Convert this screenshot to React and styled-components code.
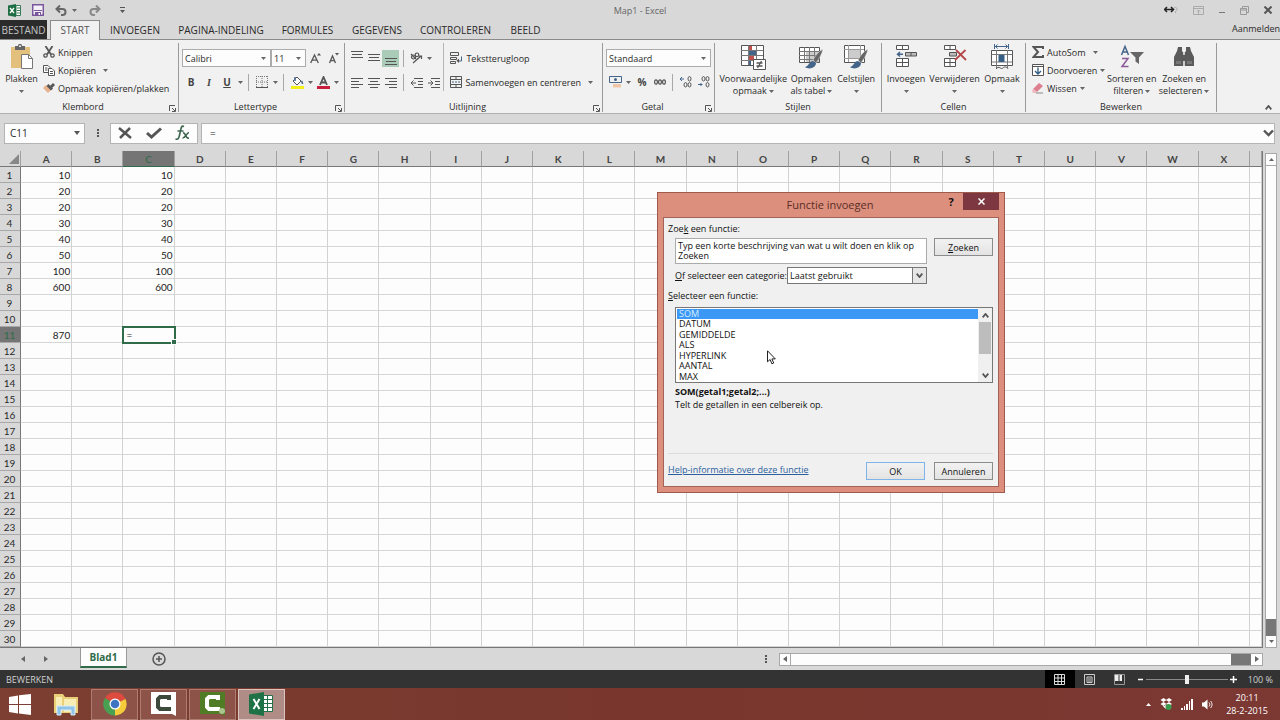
import { useState } from 'react';
import styled, { createGlobalStyle, css } from 'styled-components';

const GlobalStyle = createGlobalStyle`
  :root {
    --chrome: #d8d8d8;
    --ribbon: #f1f1f1;
    --line: #8a8a8a;
    --ink: #2a2a2a;
    --green: #2f6b48;
    --ui: 'Open Sans', 'Noto Sans', sans-serif;
    --cell: Lato, 'Open Sans', sans-serif;
  }
  * {
    box-sizing: border-box;
  }
  body {
    margin: 0;
    overflow: hidden;
    font: 500 9px/11px var(--ui);
    color: var(--ink);
  }
  button, input, select, textarea {
    font: inherit;
    color: inherit;
    margin: 0;
    padding: 0;
    border: 0;
    border-radius: 0;
    background: none;
    outline: none;
  }
  svg {
    display: block;
    flex: none;
  }
`;

const Window = styled.div`
  position: relative;
  display: flex;
  flex-direction: column;
  height: 100vh;
  background: var(--chrome);
`;

/* title bar */

const TitleBar = styled.header`
  display: grid;
  grid-template-columns: 1fr auto 1fr;
  align-items: center;
  height: 20px;
  padding: 0 8px;
  h1 {
    margin: 0;
    font: inherit;
    color: #666;
  }
`;

const QuickAccess = styled.div`
  display: flex;
  align-items: center;
  height: 18px;
  gap: ${(p) => p.$gap || 0}px;
  justify-content: ${(p) => (p.$end ? 'flex-end' : 'flex-start')};
`;

/* ribbon tabs */

const TabBar = styled.nav`
  display: flex;
  height: 20px;
  border-bottom: 1px solid var(--line);
  white-space: nowrap;
`;

const Tab = styled.button`
  width: ${(p) => p.$w}px;
  height: 19px;
  padding-top: 1px;
  font-size: 10px;
  ${(p) => p.$file && css`
    background: #2b2b2b;
    color: #c4c4c4;
    margin-right: 3px;
  `}
  ${(p) => p.$active && css`
    height: 20px;
    padding: 0;
    border: 1px solid var(--line);
    border-bottom: 0;
    background: var(--ribbon);
    color: #555;
  `}
`;

const SignIn = styled.a`
  margin: 3px 0 0 auto;
  color: inherit;
  text-decoration: none;
`;

/* ribbon */

const RibbonBar = styled.div`
  display: flex;
  height: 74px;
  background: var(--ribbon);
  border-bottom: 1px solid #b0b0b0;
  white-space: nowrap;
`;

const Group = styled.section`
  position: relative;
  display: flex;
  flex-direction: column;
  flex: none;
  width: ${(p) => p.$w}px;
  height: 69px;
  margin-top: 3px;
  border-right: 1px solid #9a9a9a;
  footer {
    margin-top: auto;
    padding-right: ${(p) => (p.$launcher ? 12 : 0)}px;
    height: 10px;
    line-height: 10px;
    text-align: center;
  }
`;

const Launcher = styled.button`
  position: absolute;
  right: 2px;
  bottom: 0;
  height: 7px;
`;

const GroupBody = styled.div`
  display: flex;
  justify-content: ${(p) => (p.$center ? 'center' : 'flex-start')};
  padding: 0 ${(p) => p.$pad || 0}px;
`;

const Stack = styled.div`
  display: flex;
  flex-direction: column;
  padding-left: ${(p) => p.$pad || 0}px;
`;

const BigButton = styled.button`
  display: flex;
  flex-direction: column;
  align-items: center;
  width: ${(p) => p.$w}px;
  height: 56px;
  padding-top: 1px;
  line-height: 12px;
  > svg:first-child {
    margin-bottom: 3px;
  }
  span {
    display: flex;
    align-items: center;
    justify-content: center;
    gap: 2px;
    height: 12px;
  }
`;

const LineButton = styled.button`
  display: flex;
  align-items: center;
  gap: 3px;
  height: 18px;
`;

const Spacer = styled.i`
  width: 1px;
`;

const ToolRow = styled.div`
  display: flex;
  align-items: center;
  height: 18px;
  margin-top: 6px;
`;

const Tool = styled.button`
  display: flex;
  align-items: center;
  justify-content: center;
  width: ${(p) => p.$w || 18}px;
  height: 17px;
  background: ${(p) => (p.$on ? '#a9cbb8' : 'none')};
`;

const Glyph = styled.span`
  font-size: 10px;
  font-weight: 700;
  color: #444;
  font-style: ${(p) => (p.$italic ? 'italic' : 'normal')};
  font-family: ${(p) => (p.$italic ? "'Liberation Serif', serif" : 'inherit')};
  text-decoration: ${(p) => (p.$under ? 'underline' : 'none')};
`;

const Sep = styled.i`
  width: 1px;
  height: 17px;
  margin: 0 4px;
  background: #a8a8a8;
`;

const AlignBlock = styled.div`
  width: 99px;
  border-right: 1px solid #b5b5b5;
`;

const ComboBox = styled.label`
  display: flex;
  align-items: center;
  width: ${(p) => p.$w}px;
  height: 18px;
  padding-right: 4px;
  border: 1px solid #ababab;
  background: #fdfdfd;
  select {
    flex: 1;
    min-width: 0;
    padding-left: 2px;
    appearance: none;
  }
`;

const Collapse = styled.button`
  align-self: flex-end;
  margin: 0 8px 3px auto;
`;

/* formula bar */

const FormulaBar = styled.div`
  display: flex;
  align-items: center;
  height: 37px;
  padding: 1px 5px 0 4px;
`;

const NameBox = styled.label`
  display: flex;
  align-items: center;
  width: 81px;
  height: 21px;
  padding: 0 4px 0 5px;
  border: 1px solid #b4b4b4;
  background: #fdfdfd;
  input {
    flex: 1;
    min-width: 0;
    font-size: 10px;
  }
`;

const Dots = styled.span`
  display: flex;
  justify-content: center;
  width: 25px;
`;

const FormulaTools = styled.div`
  display: flex;
  align-items: center;
  justify-content: space-around;
  width: 88px;
  height: 21px;
  margin-right: 3px;
  border: 1px solid #b4b4b4;
  background: #fdfdfd;
`;

const FormulaField = styled.label`
  display: flex;
  align-items: center;
  flex: 1;
  height: 21px;
  padding-left: 8px;
  border: 1px solid #b4b4b4;
  background: #fdfdfd;
  input {
    flex: 1;
    font-size: 10px;
  }
`;

/* sheet */

const SheetArea = styled.main`
  display: flex;
  flex: 1;
  min-height: 0;
  overflow: hidden;
`;

const SheetFrame = styled.div`
  flex: 1;
  overflow: hidden;
  border-right: 1px solid #777;
  border-bottom: 1px solid #777;
`;

const Grid = styled.table`
  width: 100%;
  table-layout: fixed;
  border-collapse: separate;
  border-spacing: 0;
  font: 10px/13px var(--cell);
  color: #1c1c1c;
  th, td {
    height: 16px;
    padding: 2px 1px 0 0;
    overflow: hidden;
  }
  thead th {
    padding: 1px 0 0;
  }
  col.rows {
    width: 21px;
  }
  col.rest {
    width: 12px;
  }
`;

const ColHead = styled.th`
  font-weight: ${(p) => (p.$on ? 400 : 700)};
  color: ${(p) => (p.$on ? 'var(--green)' : '#444')};
  background: ${(p) => (p.$on ? '#757575' : 'var(--chrome)')};
  border-right: 1px solid #a0a0a0;
  border-bottom: 1px solid ${(p) => (p.$on ? 'var(--green)' : '#777')};
  svg {
    margin-left: auto;
  }
`;

const RowHead = styled.th`
  font-weight: 400;
  color: ${(p) => (p.$on ? 'var(--green)' : '#2a2a2a')};
  background: ${(p) => (p.$on ? '#757575' : 'var(--chrome)')};
  border-right: 1px solid #777;
  border-bottom: 1px solid #a8a8a8;
`;

const Cell = styled.td`
  text-align: right;
  background: #fdfdfd;
  border-right: 1px solid #d2d2d2;
  border-bottom: 1px solid #d6d6d6;
  ${(p) => p.$active && css`
    position: relative;
    text-align: left;
    && {
      padding-left: 3px;
      overflow: visible;
    }
    outline: 2px solid var(--green);
    outline-offset: -1px;
    &::after {
      content: '';
      position: absolute;
      right: -3px;
      bottom: -3px;
      width: 4px;
      height: 4px;
      border: 1px solid #fff;
      background: var(--green);
      box-sizing: content-box;
    }
  `}
`;

const ScrollBar = styled.div`
  display: flex;
  flex-direction: column;
  width: 12px;
  margin: 2px 3px 0 2px;
  border: 1px solid #a8a8a8;
  background: #fdfdfd;
  button {
    display: grid;
    place-items: center;
    height: 11px;
  }
  button:first-child {
    border-bottom: 1px solid #a8a8a8;
    height: 12px;
  }
  i {
    height: 17px;
    margin-top: auto;
    background: #777;
  }
`;

const SheetTabs = styled.div`
  display: flex;
  align-items: center;
  height: 22px;
  padding: 0 17px 0 21px;
`;

const SheetTab = styled.button`
  align-self: flex-start;
  width: 47px;
  height: 20px;
  margin: 0 25px 0 27px;
  border: 1px solid #999;
  border-top: 0;
  border-bottom: 2px solid var(--green);
  background: #fdfdfd;
  color: var(--green);
  font-size: 10px;
  font-weight: 700;
`;

const NavArrow = styled.button`
  width: 9px;
  margin-right: ${(p) => p.$mr || 0}px;
`;

const AddSheet = styled.button`
  margin-right: auto;
`;

const HScroll = styled.div`
  display: flex;
  width: 39%;
  height: 13px;
  border: 1px solid #a8a8a8;
  background: #fdfdfd;
  button {
    display: grid;
    place-items: center;
    width: 11px;
  }
  button:first-child {
    border-right: 1px solid #a8a8a8;
  }
  i {
    width: 20px;
    margin-left: auto;
    background: #777;
  }
`;

/* status bar */

const StatusBar = styled.footer`
  display: flex;
  align-items: center;
  height: 18px;
  padding: 0 7px 0 6px;
  background: #333;
  color: #d0d0d0;
  > span:first-child {
    margin-right: auto;
  }
`;

const ViewButton = styled.button`
  display: grid;
  place-items: center;
  width: 30px;
  height: 18px;
  background: ${(p) => (p.$on ? '#000' : 'none')};
`;

const ZoomControl = styled.div`
  display: flex;
  align-items: center;
  gap: 2px;
  margin: 0 11px 0 2px;
  input {
    appearance: none;
    width: 82px;
    height: 12px;
    background: linear-gradient(#8a8a8a, #8a8a8a) center / 100% 1px no-repeat;
  }
  input::-webkit-slider-thumb {
    appearance: none;
    width: 4px;
    height: 9px;
    background: #eee;
  }
`;

/* taskbar */

const Taskbar = styled.footer`
  display: flex;
  align-items: center;
  height: 32px;
  padding-right: 12px;
  background: linear-gradient(90deg, #7c3f31, #78362c 50%, #7c3833);
  color: #fff;
`;

const Pinned = styled.button`
  display: grid;
  place-items: center;
  width: ${(p) => p.$w}px;
  height: 31px;
`;

const Running = styled.button`
  display: grid;
  place-items: center;
  width: 47px;
  height: 31px;
  margin-right: 2px;
  border: 1px solid ${(p) => (p.$on ? '#dcc4c0' : '#ad7c72')};
  background: ${(p) => (p.$on ? '#b08c86' : '#8d5349')};
`;

const Tray = styled.div`
  display: flex;
  align-items: center;
  gap: 9px;
  margin-left: auto;
  padding-right: 13px;
`;

const Clock = styled.time`
  text-align: center;
  line-height: 13px;
`;

/* dialog */

const DialogFrame = styled.section`
  position: absolute;
  left: 657px;
  top: 192px;
  display: flex;
  flex-direction: column;
  width: 348px;
  height: 301px;
  padding: 0 5px 5px;
  border: 1px solid #a05a4c;
  background: #dc8f7d;
  color: #111;
`;

const DialogTitle = styled.header`
  display: grid;
  grid-template-columns: 58px 1fr 24px 36px;
  height: 24px;
  h2 {
    margin: 0;
    font-size: 11px;
    font-weight: 500;
    line-height: 24px;
    color: #5a2e26;
    text-align: center;
  }
`;

const HelpButton = styled.button`
  height: 17px;
  font-size: 11px;
  font-weight: 700;
`;

const CloseButton = styled.button`
  display: grid;
  place-items: center;
  height: 17px;
  background: #7d3741;
`;

const DialogForm = styled.form`
  display: flex;
  flex-direction: column;
  flex: 1;
  padding: 5px 5px 6px 4px;
  border: 1px solid #a46356;
  background: #f0f0f0;
`;

const SearchRow = styled.div`
  display: flex;
  justify-content: space-between;
  margin: 4px 0 3px 7px;
  textarea {
    width: 252px;
    height: 26px;
    padding: 2px;
    border: 1px solid #ababab;
    background: #fff;
    line-height: 10px;
    resize: none;
    overflow: hidden;
  }
`;

const PushButton = styled.button`
  width: 59px;
  height: 18px;
  border: 1px solid ${(p) => (p.$default ? '#7eb4ea' : '#8c8c8c')};
  background: linear-gradient(#f2f2f2, #e3e3e3);
`;

const CategoryRow = styled.div`
  display: flex;
  justify-content: space-between;
  align-items: center;
  width: 252px;
  margin: 0 0 6px 7px;
`;

const Category = styled.div`
  display: flex;
  width: 140px;
  height: 17px;
  border: 1px solid #777;
  background: #fff;
  select {
    flex: 1;
    padding-left: 2px;
    appearance: none;
  }
  span {
    display: grid;
    place-items: center;
    width: 14px;
    border-left: 1px solid #777;
    background: #e6e6e6;
  }
`;

const ListFrame = styled.div`
  display: flex;
  height: 76px;
  margin: 6px 0 3px 7px;
  border: 1px solid #777;
  background: #fff;
`;

const FunctionList = styled.ul`
  display: grid;
  grid-auto-rows: 1fr;
  flex: 1;
  margin: 0;
  padding: 1px 0 0 1px;
  list-style: none;
`;

const FunctionItem = styled.li`
  padding-left: 2px;
  line-height: 10px;
  color: ${(p) => (p.$on ? '#d8ecff' : 'inherit')};
  background: ${(p) => (p.$on ? '#3c98f5' : 'none')};
`;

const ListScroll = styled.div`
  display: flex;
  flex-direction: column;
  width: 14px;
  background: #f0f0f0;
  button {
    display: grid;
    place-items: center;
    height: 14px;
  }
  i {
    height: 32px;
    margin: 0 1px auto;
    background: #bdbdbd;
  }
`;

const Info = styled.p`
  margin: 0 0 2px 7px;
  font-weight: ${(p) => (p.$bold ? 700 : 500)};
`;

const DialogFooter = styled.div`
  display: flex;
  gap: 9px;
  margin-top: auto;
  padding-top: 8px;
  border-top: 1px solid #dcdcdc;
  a {
    margin: 2px auto 0 0;
    color: #2b5f9e;
  }
`;

const Pointer = styled.svg`
  position: absolute;
  left: 767px;
  top: 349px;
`;

/* icons */

function Svg({ w, h = w, children, ...rest }) {
  return (
    <svg width={w} height={h} viewBox={`0 0 ${w} ${h}`} fill="none" stroke="#555" aria-hidden="true" {...rest}>
      {children}
    </svg>
  );
}

const Caret = () => <Svg w={5} h={3}><path d="M0 0h5L2.5 3z" fill="#666" stroke="none" /></Svg>;
const CaretUp = () => <Svg w={5} h={3}><path d="M0 3h5L2.5 0z" fill="#666" stroke="none" /></Svg>;
const Left = () => <Svg w={4} h={6}><path d="M4 0v6L0 3z" fill="#666" stroke="none" /></Svg>;
const Right = () => <Svg w={4} h={6}><path d="M0 0v6l4-3z" fill="#666" stroke="none" /></Svg>;
const Chevron = ({ up, w = 7, sw = 1.8 }) => (
  <Svg w={w} h={5} strokeWidth={sw}><path d={up ? `M.7 4.3 ${w / 2} 1l${w / 2 - 0.7} 3.3` : `M.7.7 ${w / 2} 4l${w / 2 - 0.7}-3.3`} /></Svg>
);
const BigChevron = () => <Svg w={11} h={8} strokeWidth="2.4"><path d="m1 1.5 4.5 4.5L10 1.500" /></Svg>;

const ArrowTool = () => <Tool $w={8} aria-label="Meer"><Caret /></Tool>;

const ExcelSmall = () => (
  <Svg w={13} stroke="none">
    <path d="M8 1.5h4.5v10H8z" fill="#fff" stroke="#3b7a57" />
    <path d="M9 4h3M9 6.5h3M9 9h3" stroke="#3b7a57" />
    <path d="M0 1.5 8 0v13l-8-1.5z" fill="#1f6e43" />
    <path d="m2 4 4 5M6 4 2 9" stroke="#fff" strokeWidth="1.3" />
  </Svg>
);
const SaveIcon = () => (
  <Svg w={12}>
    <path d="M.7.7h10.600v10.600H.7z" stroke="#77569b" strokeWidth="1.5" fill="#f4f0f8" />
    <path d="M2 6.5h8" stroke="#77569b" />
    <path d="M3 8h6v4H3z" fill="#77569b" stroke="none" />
    <path d="M6.5 9H8v2H6.5z" fill="#fff" stroke="none" />
  </Svg>
);
const UndoIcon = ({ redo }) => (
  <Svg w={12} h={11} stroke={redo ? '#888' : '#666'} strokeWidth="2">
    <g transform={redo ? 'matrix(-1 0 0 1 12 0)' : undefined}>
      <path d="M5 .5 1.5 4 5 7.5M2 4h5.5c4 0 4 6 0 6H6" />
    </g>
  </Svg>
);
const PasteIcon = () => (
  <Svg w={25} h={26} stroke="none">
    <path d="M2 3h19v21H2z" fill="#e3c07c" />
    <path d="M6 6V2h3c0-3 4-3 4 0h3v4z" fill="#666" />
    <path d="M10 1.500h2V3h-2z" fill="#eee" />
    <path d="M12.5 10.5h7l4 4v10h-11z" fill="#fff" stroke="#777" />
    <path d="M19.5 10.5v4h4" stroke="#777" />
  </Svg>
);
const CutIcon = () => (
  <Svg w={12} strokeWidth="1.3">
    <path d="m2.500 0 5.500 8.500M9.500 0 4 8.500" strokeWidth="1.800" />
    <circle cx="2.5" cy="9.5" r="1.7" /><circle cx="9.5" cy="9.5" r="1.7" />
  </Svg>
);
const CopyIcon = () => (
  <Svg w={12} h={11}>
    <path d="M.5.5H5l2 2v5H.5z" fill="#fff" /><path d="M2 3h2.500M2 5h2.500" />
    <path d="M5.500 3.500H9L11.500 6v4.500h-6z" fill="#fff" /><path d="M7 6.500h3M7 8.500h3" />
  </Svg>
);
const BrushIcon = () => (
  <Svg w={12} h={11} stroke="none">
    <path d="m0 5 3-3 5 5-3 3z" fill="#e8b28c" />
    <path d="m3.5 3 2-2L10 5.500l-2 2z" fill="#555" />
    <path d="m7 3 3-3 2 2-3 3z" fill="#555" />
  </Svg>
);
const GrowIcon = ({ down }) => (
  <Svg w={11} h={12} strokeWidth="1.3">
    {down ? <path d="m1.5 11 3-7 3 7M2.500 8.700h4" /> : <path d="M.7 11 4.500 3l3.800 8M2 8.200h5" />}
    <path d={down ? 'M7 1h4L9 3.5z' : 'M7 3.5h4L9 1z'} fill="#555" stroke="none" />
  </Svg>
);
const BorderIcon = () => (
  <Svg w={12}>
    <path d="M.5 0v12M6 0v12M11.500 0v12M0 .5h12M0 6h12" strokeDasharray="1 1" stroke="#777" />
    <path d="M0 11.500h12" />
  </Svg>
);
const FillIcon = () => (
  <Svg w={13}>
    <path d="m2 5 4-4 4 4-4 4z" fill="#fff" /><path d="M4 1v4M10.500 5c1 1.500 1 2 1 3" strokeWidth="1.500" stroke="#44658a" />
    <path d="M0 10h13v3H0z" fill="#f3ef1a" stroke="none" />
  </Svg>
);
const FontColorIcon = () => (
  <Svg w={13}>
    <path d="m3 9 3.500-8L10 9M4 6.500h5" strokeWidth="1.800" />
    <path d="M0 10h13v3H0z" fill="#c8203a" stroke="none" />
  </Svg>
);
const Lines = ({ d }) => <Svg w={12} h={15}><path d={d} /></Svg>;
const OrientIcon = () => (
  <Svg w={13} h={12} strokeWidth="1.200">
    <path d="m3 11 8-7M8.500 4h3v3" />
    <circle cx="3.500" cy="5" r="2" /><circle cx="7" cy="2.800" r="1.800" /><path d="m1 2 5 5" />
  </Svg>
);
const WrapIcon = () => (
  <Svg w={13} h={12}>
    <path d="M.5.5h8v3h-8zM.5 5.500h6v2h-6zM.5 9.500h5v2h-5z" />
    <path d="M9 9h2.500V4.500" stroke="#44658a" /><path d="m9 6.500-2.500 2.300L9 11z" fill="#555" stroke="none" />
  </Svg>
);
const MergeIcon = () => (
  <Svg w={12} h={12}>
    <path d="M.5.5h11v11H.5zM0 3.500h12M0 8.500h12M6 0v3.500M6 8.500V12" /><path d="M2 6h8" stroke="#44658a" strokeDasharray="2 1" />
  </Svg>
);
const CurrencyIcon = () => (
  <Svg w={13} h={12}>
    <path d="M.5.5h12v6H.5z" stroke="#44658a" /><circle cx="6.500" cy="3.500" r="1.500" fill="#44658a" stroke="none" />
    <path d="M4 8h8v3.500H4z" fill="#f0c6a8" stroke="none" />
  </Svg>
);
const DecimalIcon = ({ less }) => (
  <Svg w={12} h={12}>
    <ellipse cx={less ? 5.5 : 9.5} cy="2.8" rx="1.5" ry="2.200" /><ellipse cx="9.5" cy={less ? 2.8 : 8.8} rx="1.5" ry="2.200" />
    <ellipse cx={less ? 9.5 : 5.5} cy="8.8" rx="1.5" ry="2.200" />
    <path d={less ? 'M0 8.5h4M2.5 7 4 8.5 2.5 10' : 'M4 3H0M2 1 0 3l2 2'} stroke="#44658a" />
  </Svg>
);
const ConditionalIcon = () => (
  <Svg w={25} h={26}>
    <path d="M.5 1.5h22v20H.5z" fill="#fff" /><path d="M0 6.500h22M0 11.500h22M0 16.500h22M7.500 1v20M15.500 1v20" stroke="#777" />
    <path d="M8 2h3v4H8zM8 12h5v4H8z" fill="#c0504d" stroke="none" /><path d="M8 7h7v4H8zM8 17h2v4H8z" fill="#44658a" stroke="none" />
    <path d="M12.500 15.500h12v10h-12z" fill="#fff" /><path d="M15.500 19h6M15.500 22h6M20.500 17l-4 7" strokeWidth="1.300" />
  </Svg>
);
const Brush = () => (
  <>
    <path d="M24 5c-4 2-8 7-10 11l3 3c3-4 6-9 7-14z" fill="#666" stroke="#f1f1f1" strokeWidth=".5" />
    <path d="M14 17c-4 0-4 5-8 6 4 3 11 1 11-4z" fill="#44658a" stroke="none" />
  </>
);
const FormatTableIcon = () => (
  <Svg w={25} h={26}>
    <path d="M.5 3.500h20v15H.5z" fill="#fff" /><path d="M7 8h13v10H7z" fill="#ccc" stroke="none" />
    <path d="M0 7.500h20M0 11.500h20M0 15.500h20M5.500 3v15M10.500 3v15M15.500 3v15" stroke="#777" /><Brush />
  </Svg>
);
const CellStyleIcon = () => (
  <Svg w={25} h={26}>
    <path d="M.5 1.500h20v17H.5z" fill="#fff" /><path d="M4 5.500h13v9H4z" fill="#ccc" stroke="none" />
    <path d="M0 5.500h20M0 14.500h20M4.500 1v17M16.500 1v17" stroke="#999" /><Brush />
  </Svg>
);
const InsertIcon = () => (
  <Svg w={24} h={26}>
    <path d="M2.500 1.500h12v4h-12zM8.500 1.500v4M2.500 14.500h12v8h-12zM8.500 14v8M2.500 18.500h12" fill="#fff" />
    <path d="M11.500 8.500h11V12h-11zM17 8.500V12" fill="#bbb" />
    <path d="M9 10.300H3.500M6 8l-2.500 2.300L6 12.500" strokeWidth="1.500" stroke="#44658a" />
  </Svg>
);
const DeleteIcon = () => (
  <Svg w={24} h={26}>
    <path d="M1.500 1.500h11v4h-11zM7 1.500v4M1.500 14.500h11v8h-11zM7 14v8M1.500 18.500h11" fill="#fff" />
    <path d="M6.500 8.500h7V12h-7z" fill="#bbb" />
    <path d="m13 6 10 10M22.500 6 12 16" strokeWidth="1.800" stroke="#b5484a" />
  </Svg>
);
const FormatIcon = () => (
  <Svg w={24} h={26}>
    <path d="M4.500 0v5M18.500 0v5M5 2.500h13M7.500.5l-2 2 2 2M15.500.5l2 2-2 2" stroke="#44658a" />
    <path d="M1.500 6.500h21v15h-21z" fill="#fff" /><path d="M1.500 10.500h21M1.500 18h21M6.500 6v18M17.500 6v18" stroke="#777" />
    <path d="M8.500 11h6v7h-6z" fill="#365f85" stroke="none" /><path d="M6 25c3-4 5 1 7-1s4-1 5 1" />
  </Svg>
);
const SigmaIcon = () => <Svg w={12} h={12}><path d="M11 3V1H1.500L6 6l-4.500 5H11V9" strokeWidth="2" /></Svg>;
const FillDownIcon = () => (
  <Svg w={12} h={12}><path d="M.5.5h11v11H.5zM0 2.500h12" fill="#fff" /><path d="M6 3.500v6M3 7l3 3 3-3" stroke="#365f85" strokeWidth="1.400" /></Svg>
);
const EraserIcon = () => (
  <Svg w={12} h={12} stroke="none"><path d="m1 7 6-6 4 3-6 6z" fill="#dd7f8f" /><path d="m1 7 4 3-1 1H1L0 9z" fill="#efb9c1" /><path d="M4 11h7" stroke="#888" /></Svg>
);
const SortIcon = () => (
  <Svg w={24} h={26}>
    <path d="M1.500 11 5 2.500 8.500 11M3 8h4.500" stroke="#44658a" strokeWidth="1.500" />
    <path d="M2 14.500h6l-6 8h6.500" stroke="#8a5a9b" strokeWidth="1.500" />
    <path d="M10 8h14l-5 5.500v6.500l-3.500-2.500v-4z" fill="#666" stroke="none" />
  </Svg>
);
const FindIcon = () => (
  <Svg w={22} h={26} stroke="none" fill="#5a5a5a">
    <path d="M5 3h4v4l1.500 2v13H1V13l3-6zM17 3h-4v4l-1.500 2v13H21V13l-3-6z" /><path d="M9 11h4v6H9z" />
    <path d="M3 17h5v3H3zM14 17h5v3h-5z" fill="#777" /><path d="M10.500 9h1v2h-1zM10.500 17h1v5h-1z" fill="#f1f1f1" />
  </Svg>
);
const MoreDots = () => <Svg w={2} h={8}><path d="M1 0v8" strokeWidth="2" strokeDasharray="2 1" /></Svg>;

const STYLE_TOOLS = [
  { label: ['Voorwaardelijke', 'opmaak'], Icon: ConditionalIcon, w: 71 },
  { label: ['Opmaken', 'als tabel'], Icon: FormatTableIcon, w: 46 },
  { label: ['Celstijlen', ''], Icon: CellStyleIcon, w: 44 },
];
const CELL_TOOLS = [
  { label: ['Invoegen', ''], Icon: InsertIcon, w: 45 },
  { label: ['Verwijderen', ''], Icon: DeleteIcon, w: 52 },
  { label: ['Opmaak', ''], Icon: FormatIcon, w: 43 },
];
const FIND_TOOLS = [
  { label: ['Sorteren en', 'filteren'], Icon: SortIcon, w: 53 },
  { label: ['Zoeken en', 'selecteren'], Icon: FindIcon, w: 52 },
];

function BigTool({ label, Icon, w }) {
  return (
    <BigButton $w={w}>
      <Icon />
      <span>{label[0]}</span>
      <span>{label[1]}<Caret /></span>
    </BigButton>
  );
}

function RibbonGroup({ title, w, launcher, children }) {
  return (
    <Group $w={w} $launcher={launcher}>
      {children}
      <footer>{title}</footer>
      {launcher && (
        <Launcher aria-label={`${title} instellingen`}>
          <Svg w={7}><path d="M.5 6V.5H6M3 3l3 3M6.500 3v3.500H3" /></Svg>
        </Launcher>
      )}
    </Group>
  );
}

function Combo({ value, w, label }) {
  return (
    <ComboBox $w={w}>
      <select aria-label={label} defaultValue={value}><option>{value}</option></select>
      <Caret />
    </ComboBox>
  );
}

function Ribbon() {
  return (
    <RibbonBar>
      <RibbonGroup title="Klembord" w={179} launcher>
        <GroupBody>
          <BigTool label={['Plakken', '']} Icon={PasteIcon} w={43} />
          <Stack>
            <LineButton><CutIcon />Knippen</LineButton>
            <LineButton><CopyIcon />Kopiëren<Spacer /><Caret /></LineButton>
            <LineButton><BrushIcon />Opmaak kopiëren/plakken</LineButton>
          </Stack>
        </GroupBody>
      </RibbonGroup>

      <RibbonGroup title="Lettertype" w={166} launcher>
        <GroupBody $pad={3}>
          <Stack>
            <ToolRow>
              <Combo value="Calibri" w={89} label="Lettertype" />
              <Combo value="11" w={35} label="Tekengrootte" />
              <Tool aria-label="Groter"><GrowIcon /></Tool>
              <Tool aria-label="Kleiner"><GrowIcon down /></Tool>
            </ToolRow>
            <ToolRow>
              <Tool><Glyph>B</Glyph></Tool>
              <Tool><Glyph $italic>I</Glyph></Tool>
              <Tool><Glyph $under>U</Glyph></Tool>
              <ArrowTool />
              <Sep />
              <Tool aria-label="Randen"><BorderIcon /></Tool>
              <ArrowTool />
              <Sep />
              <Tool aria-label="Opvulkleur"><FillIcon /></Tool>
              <ArrowTool />
              <Tool aria-label="Tekstkleur"><FontColorIcon /></Tool>
              <ArrowTool />
            </ToolRow>
          </Stack>
        </GroupBody>
      </RibbonGroup>

      <RibbonGroup title="Uitlijning" w={258} launcher>
        <GroupBody $pad={3}>
          <AlignBlock>
            <ToolRow>
              <Tool $w={17} aria-label="Boven"><Lines d="M0 .5h12M1 3.5h10M0 6.5h12" /></Tool>
              <Tool $w={17} aria-label="Midden"><Lines d="M0 3.5h12M1 6.500h10M0 9.500h12" /></Tool>
              <Tool $w={17} $on aria-label="Onder"><Lines d="M0 7.5h12M1 10.500h10M0 13.500h12" /></Tool>
              <Sep />
              <Tool $w={17} aria-label="Afdrukstand"><OrientIcon /></Tool>
              <ArrowTool />
            </ToolRow>
            <ToolRow>
              <Tool $w={17} aria-label="Links"><Lines d="M0 3.5h12M0 6.5h8M0 9.5h12M0 12.5h8" /></Tool>
              <Tool $w={17} aria-label="Centreren"><Lines d="M0 3.5h12M2 6.5h8M0 9.5h12M2 12.5h8" /></Tool>
              <Tool $w={17} aria-label="Rechts"><Lines d="M0 3.5h12M4 6.5h8M0 9.5h12M4 12.5h8" /></Tool>
              <Sep />
              <Tool $w={17} aria-label="Inspringing verkleinen"><Lines d="M3 3.5h9M7 6.500h5M7 9.500h5M3 12.500h9M5 8H0M2.500 5.500 0 8l2.500 2.500" /></Tool>
              <Tool $w={17} aria-label="Inspringing vergroten"><Lines d="M3 3.5h9M7 6.500h5M7 9.500h5M3 12.500h9M5 8H0M2.500 5.500 5 8 2.500 10.500" /></Tool>
            </ToolRow>
          </AlignBlock>
          <Stack $pad={6}>
            <ToolRow><LineButton><WrapIcon />Tekstterugloop</LineButton></ToolRow>
            <ToolRow>
              <LineButton><MergeIcon />Samenvoegen en centreren</LineButton>
              <Tool aria-label="Meer"><Caret /></Tool>
            </ToolRow>
          </Stack>
        </GroupBody>
      </RibbonGroup>

      <RibbonGroup title="Getal" w={112} launcher>
        <GroupBody $pad={3}>
          <Stack>
            <ToolRow><Combo value="Standaard" w={105} label="Getalnotatie" /></ToolRow>
            <ToolRow>
              <Tool aria-label="Valuta"><CurrencyIcon /></Tool>
              <ArrowTool />
              <Tool $w={20}><Glyph>%</Glyph></Tool>
              <Tool $w={16} aria-label="Duizendtallen">
                <Svg w={12} h={6} strokeWidth="1.2"><ellipse cx="2" cy="3" rx="1.4" ry="2.200" /><ellipse cx="6" cy="3" rx="1.4" ry="2.200" /><ellipse cx="10" cy="3" rx="1.4" ry="2.200" /></Svg>
              </Tool>
              <Sep />
              <Tool aria-label="Meer decimalen"><DecimalIcon /></Tool>
              <Tool aria-label="Minder decimalen"><DecimalIcon less /></Tool>
            </ToolRow>
          </Stack>
        </GroupBody>
      </RibbonGroup>

      <RibbonGroup title="Stijlen" w={167}>
        <GroupBody $pad={3}>{STYLE_TOOLS.map((t) => <BigTool key={t.label[0]} {...t} />)}</GroupBody>
      </RibbonGroup>

      <RibbonGroup title="Cellen" w={144}>
        <GroupBody $center>{CELL_TOOLS.map((t) => <BigTool key={t.label[0]} {...t} />)}</GroupBody>
      </RibbonGroup>

      <RibbonGroup title="Bewerken" w={191}>
        <GroupBody $pad={6}>
          <Stack>
            <LineButton><SigmaIcon />AutoSom<Spacer /><Caret /></LineButton>
            <LineButton><FillDownIcon />Doorvoeren<Caret /></LineButton>
            <LineButton><EraserIcon />Wissen<Caret /></LineButton>
          </Stack>
          {FIND_TOOLS.map((t) => <BigTool key={t.label[0]} {...t} />)}
        </GroupBody>
      </RibbonGroup>

      <Collapse aria-label="Lint samenvouwen"><Chevron up /></Collapse>
    </RibbonBar>
  );
}

const COLUMNS = 'ABCDEFGHIJKLMNOPQRSTUVWX'.split('');
const ROWS = Array.from({ length: 30 }, (_, i) => i + 1);
const VALUES = { 1: 10, 2: 20, 3: 20, 4: 30, 5: 40, 6: 50, 7: 100, 8: 600 };

function cellValue(col, row) {
  if (col === 'A' && row === 11) return 870;
  if (col === 'C' && row === 11) return '=';
  return col === 'A' || col === 'C' ? VALUES[row] : null;
}

function Sheet() {
  return (
    <SheetArea>
      <SheetFrame>
        <Grid>
          <colgroup>
            <col className="rows" />
            {COLUMNS.map((c) => <col key={c} />)}
            <col className="rest" />
          </colgroup>
          <thead>
            <tr>
              <ColHead aria-label="Alles selecteren"><Svg w={11} h={11}><path d="M10 0v10H0z" fill="#888" stroke="none" /></Svg></ColHead>
              {COLUMNS.map((c) => <ColHead key={c} $on={c === 'C'}>{c}</ColHead>)}
              <ColHead />
            </tr>
          </thead>
          <tbody>
            {ROWS.map((row) => (
              <tr key={row}>
                <RowHead $on={row === 11}>{row}</RowHead>
                {COLUMNS.map((c) => <Cell key={c} $active={c === 'C' && row === 11}>{cellValue(c, row)}</Cell>)}
                <Cell />
              </tr>
            ))}
          </tbody>
        </Grid>
      </SheetFrame>
      <ScrollBar>
        <button aria-label="Omhoog"><CaretUp /></button>
        <i />
        <button aria-label="Omlaag"><Caret /></button>
      </ScrollBar>
    </SheetArea>
  );
}

const FUNCTIONS = ['SOM', 'DATUM', 'GEMIDDELDE', 'ALS', 'HYPERLINK', 'AANTAL', 'MAX'];

function FunctionDialog() {
  const [selected, setSelected] = useState('SOM');

  return (
    <DialogFrame role="dialog" aria-labelledby="dialog-title">
      <DialogTitle>
        <span />
        <h2 id="dialog-title">Functie invoegen</h2>
        <HelpButton>?</HelpButton>
        <CloseButton aria-label="Sluiten"><Svg w={7} stroke="#fff" strokeWidth="1.5"><path d="m.5.5 6 6M6.500.5l-6 6" /></Svg></CloseButton>
      </DialogTitle>
      <DialogForm onSubmit={(e) => e.preventDefault()}>
        <label htmlFor="search">Zoe<u>k</u> een functie:</label>
        <SearchRow>
          <textarea id="search" defaultValue="Typ een korte beschrijving van wat u wilt doen en klik op Zoeken" />
          <PushButton type="button"><u>Z</u>oeken</PushButton>
        </SearchRow>
        <CategoryRow>
          <label htmlFor="category"><u>O</u>f selecteer een categorie:</label>
          <Category>
            <select id="category"><option>Laatst gebruikt</option></select>
            <span><Chevron /></span>
          </Category>
        </CategoryRow>
        <div id="list-label"><u>S</u>electeer een functie:</div>
        <ListFrame>
          <FunctionList role="listbox" aria-labelledby="list-label">
            {FUNCTIONS.map((name) => (
              <FunctionItem key={name} role="option" aria-selected={name === selected} $on={name === selected} onClick={() => setSelected(name)}>
                {name}
              </FunctionItem>
            ))}
          </FunctionList>
          <ListScroll>
            <button type="button" aria-label="Omhoog"><Chevron up /></button>
            <i />
            <button type="button" aria-label="Omlaag"><Chevron /></button>
          </ListScroll>
        </ListFrame>
        <Info $bold>SOM(getal1;getal2;...)</Info>
        <Info>Telt de getallen in een celbereik op.</Info>
        <DialogFooter>
          <a href="#help">Help-informatie over deze functie</a>
          <PushButton $default>OK</PushButton>
          <PushButton type="button">Annuleren</PushButton>
        </DialogFooter>
      </DialogForm>
    </DialogFrame>
  );
}

const TABS = [
  ['BESTAND', 47],
  ['START', 50],
  ['INVOEGEN', 70],
  ['PAGINA-INDELING', 102],
  ['FORMULES', 71],
  ['GEGEVENS', 68],
  ['CONTROLEREN', 89],
  ['BEELD', 51],
];

function CamtasiaIcon({ green }) {
  return (
    <Svg w={26} h={24} stroke="none">
      <path d="M0 0h25v24l-4-2H0z" fill={green ? '#4f7c25' : '#fff'} />
      <path d="M18 8V5H9L7 7v8l2 2h9v-2" stroke={green ? '#fff' : '#3c4a3c'} strokeWidth="4" />
      {green && <circle cx="22" cy="19" r="3" fill="#a9c48c" />}
    </Svg>
  );
}

function Desktop() {
  return (
    <Taskbar>
      <Pinned $w={40} aria-label="Start">
        <Svg w={22} h={21} stroke="none" fill="#fff"><path d="m0 3 9-1.500V10H0zM10 1.300 22 0v10H10zM0 11h9v8.500L0 18zM10 11h12v10l-12-1.500z" /></Svg>
      </Pinned>
      <Pinned $w={51} aria-label="Verkenner">
        <Svg w={26} h={24} stroke="none">
          <path d="M1 2h9l2 3h13v16H1z" fill="#e8cf78" /><path d="M3 5h6v15H3zM11 7h12v13H11z" fill="#f8eeb5" />
          <path d="M4 23v-9h18v9h-4v-5H8v5z" fill="#8fc4e8" stroke="#d8ecf8" />
        </Svg>
      </Pinned>
      <Running aria-label="Chrome">
        <Svg w={24} h={24} stroke="none">
          <path d="M12 12 2 6a11.500 11.500 0 0 1 20.500 1z" fill="#dd4b3e" /><path d="M12 12 22.500 7A11.500 11.500 0 0 1 12 23.500z" fill="#f5cc3a" />
          <path d="M12 12v11.500A11.500 11.500 0 0 1 2 6z" fill="#4aa052" /><circle cx="12" cy="12" r="5.500" fill="#fff" /><circle cx="12" cy="12" r="4.300" fill="#3f74c2" />
        </Svg>
      </Running>
      <Running aria-label="Camtasia"><CamtasiaIcon /></Running>
      <Running aria-label="Camtasia Recorder"><CamtasiaIcon green /></Running>
      <Running $on aria-label="Excel">
        <Svg w={26} h={24} stroke="none">
          <path d="M13.500 3.500h10v16h-10z" fill="#fff" stroke="#247047" /><path d="M14 7.500h9M14 11.500h9M14 15.500h9M18.500 3v16" stroke="#247047" />
          <path d="M0 2.500 15 0v24L0 21.500z" fill="#1f7246" /><path d="m4.500 7 6 10M10.500 7l-6 10" stroke="#fff" strokeWidth="2" />
        </Svg>
      </Running>
      <Tray>
        <Svg w={5} h={3} stroke="none"><path d="M0 3h5L2.500 0z" fill="#fff" /></Svg>
        <Svg w={12} h={12} stroke="none" fill="#fff">
          <path d="m3.500 0 3 2-3 2-3-2zM9 0l3 2-3 2-3-2zM3.500 4l3 2-3 2-3-2zM9 4l3 2-3 2-3-2z" /><path d="m3 8.500 3-1.500v4z" /><circle cx="8.500" cy="9" r="3" fill="#3c9a4c" />
        </Svg>
        <Svg w={12} h={11} stroke="none" fill="#fff"><path d="M0 9h2v2H0zM3 7h1v4H3zM5 5h2v6H5zM8 2h1v9H8zM10 0h2v11h-2z" /></Svg>
        <Svg w={11} h={11} stroke="#fff"><path d="M0 3.500h2L5.500.5v10L2 7.500H0z" fill="#fff" stroke="none" /><path d="M7 3.500c1 1 1 3 0 4M8.500 2c2 2 2 5 0 7" /></Svg>
      </Tray>
      <Clock>20:11<br />28-2-2015</Clock>
    </Taskbar>
  );
}

export default function App() {
  const [zoom, setZoom] = useState(50);

  return (
    <Window>
      <GlobalStyle />
      <TitleBar>
        <QuickAccess $gap={6}>
          <QuickAccess $gap={11}><ExcelSmall /><SaveIcon /></QuickAccess>
          <QuickAccess $gap={5}><span /><UndoIcon /><Caret /></QuickAccess>
          <QuickAccess $gap={6}><span /><UndoIcon redo /></QuickAccess>
          <QuickAccess $gap={13}><span /><Svg w={5} h={6}><path d="M0 .5h5" /><path d="M0 3h5L2.500 6z" fill="#555" stroke="none" /></Svg></QuickAccess>
        </QuickAccess>
        <h1>Map1 - Excel</h1>
        <QuickAccess $gap={15} $end>
          <Svg w={14} h={9}><path d="M1 3.500h8M3 1 .5 3.500 3 6M7 1l2.500 2.500L7 6" stroke="#222" strokeWidth="1.500" /><path d="M10 2c3-2 4 2 1.500 3.500V7" stroke="#aaa" /></Svg>
          <Svg w={11} h={9} stroke="#aaa"><path d="M.5.5h10v8H.5zM0 2.500h11M5.500 8V4M4 5.500 5.500 4 7 5.500" /></Svg>
          <Svg w={6} h={8}><path d="M0 6.500h6" stroke="#777" /></Svg>
          <Svg w={9} h={9} stroke="#999"><path d="M2.500 2.500v-2h6v6h-2M.5 2.500h6v6h-6zM1 4h5" /></Svg>
          <Svg w={8} h={8} strokeWidth="2"><path d="m.5.5 7 7M7.500.5l-7 7" /></Svg>
        </QuickAccess>
      </TitleBar>
      <TabBar>
        {TABS.map(([name, w]) => <Tab key={name} $w={w} $file={name === 'BESTAND'} $active={name === 'START'}>{name}</Tab>)}
        <SignIn href="#aanmelden">Aanmelden</SignIn>
      </TabBar>
      <Ribbon />
      <FormulaBar>
        <NameBox><input aria-label="Naamvak" defaultValue="C11" /><Svg w={6} h={4}><path d="M0 0h6L3 4z" fill="#555" stroke="none" /></Svg></NameBox>
        <Dots><MoreDots /></Dots>
        <FormulaTools>
          <Tool aria-label="Annuleren"><Svg w={14} h={12} strokeWidth="2.500"><path d="m1 1 12 10M12 1 2 11" /></Svg></Tool>
          <Tool aria-label="Invoeren"><Svg w={16} h={12} strokeWidth="3"><path d="m1 6 4.500 4L15 1.500" /></Svg></Tool>
          <Tool aria-label="Functie invoegen">
            <Svg w={15} h={16} stroke="#3d6650" strokeWidth="1.600"><path d="M9 1.500C6 0 6 4 5 8s-1 7-4.500 6M2.500 6h6" /><path d="M8 8c3-1 2 6 6 5M14 7.500c-2 0-4 6-6.500 5.500" /></Svg>
          </Tool>
        </FormulaTools>
        <FormulaField><input aria-label="Formule" defaultValue="=" /><BigChevron /></FormulaField>
      </FormulaBar>
      <Sheet />
      <SheetTabs>
        <NavArrow $mr={14} aria-label="Vorige"><Left /></NavArrow>
        <NavArrow aria-label="Volgende"><Right /></NavArrow>
        <SheetTab>Blad1</SheetTab>
        <AddSheet aria-label="Nieuw blad">
          <Svg w={14} strokeWidth="1.500"><circle cx="7" cy="7" r="6" /><path d="M7 4v6M4 7h6" /></Svg>
        </AddSheet>
        <Dots><MoreDots /></Dots>
        <HScroll><button aria-label="Links"><Left /></button><i /><button aria-label="Rechts"><Right /></button></HScroll>
      </SheetTabs>
      <StatusBar>
        <span>BEWERKEN</span>
        <ViewButton $on aria-label="Normaal"><Svg w={11} stroke="#ddd"><path d="M.5.5h10v10H.5zM.5 4h10M.5 7.500h10M4 0v11M7.500 0v11" /></Svg></ViewButton>
        <ViewButton aria-label="Pagina-indeling"><Svg w={11} stroke="#ccc"><path d="M.5.5h10v10H.5zM3 3h5v5.500H3zM4 5h3M4 7h3" /></Svg></ViewButton>
        <ViewButton aria-label="Pagina-einde"><Svg w={11} stroke="#999"><path d="M.5.5h10v10H.5z" /><path d="M1 1h3.500v6H1zM5.500 1H8v6H5.500z" fill="#eee" stroke="none" /></Svg></ViewButton>
        <ZoomControl>
          <button aria-label="Uitzoomen"><Svg w={7}><path d="M1 3.500h5" stroke="#fff" strokeWidth="1.500" /></Svg></button>
          <input type="range" aria-label="In- en uitzoomen" value={zoom} onChange={(e) => setZoom(e.target.value)} />
          <button aria-label="Inzoomen"><Svg w={7}><path d="M0 3.500h7M3.500 0v7" stroke="#fff" strokeWidth="1.500" /></Svg></button>
        </ZoomControl>
        <span>100 %</span>
      </StatusBar>
      <Desktop />
      <FunctionDialog />
      <Pointer width="9" height="16" viewBox="0 0 9 16"><path d="M.5 1.800v11l2.600-2.300 1.800 4.300 1.800-.8-1.800-4.100h3.400z" fill="#fff" stroke="#222" /></Pointer>
    </Window>
  );
}
